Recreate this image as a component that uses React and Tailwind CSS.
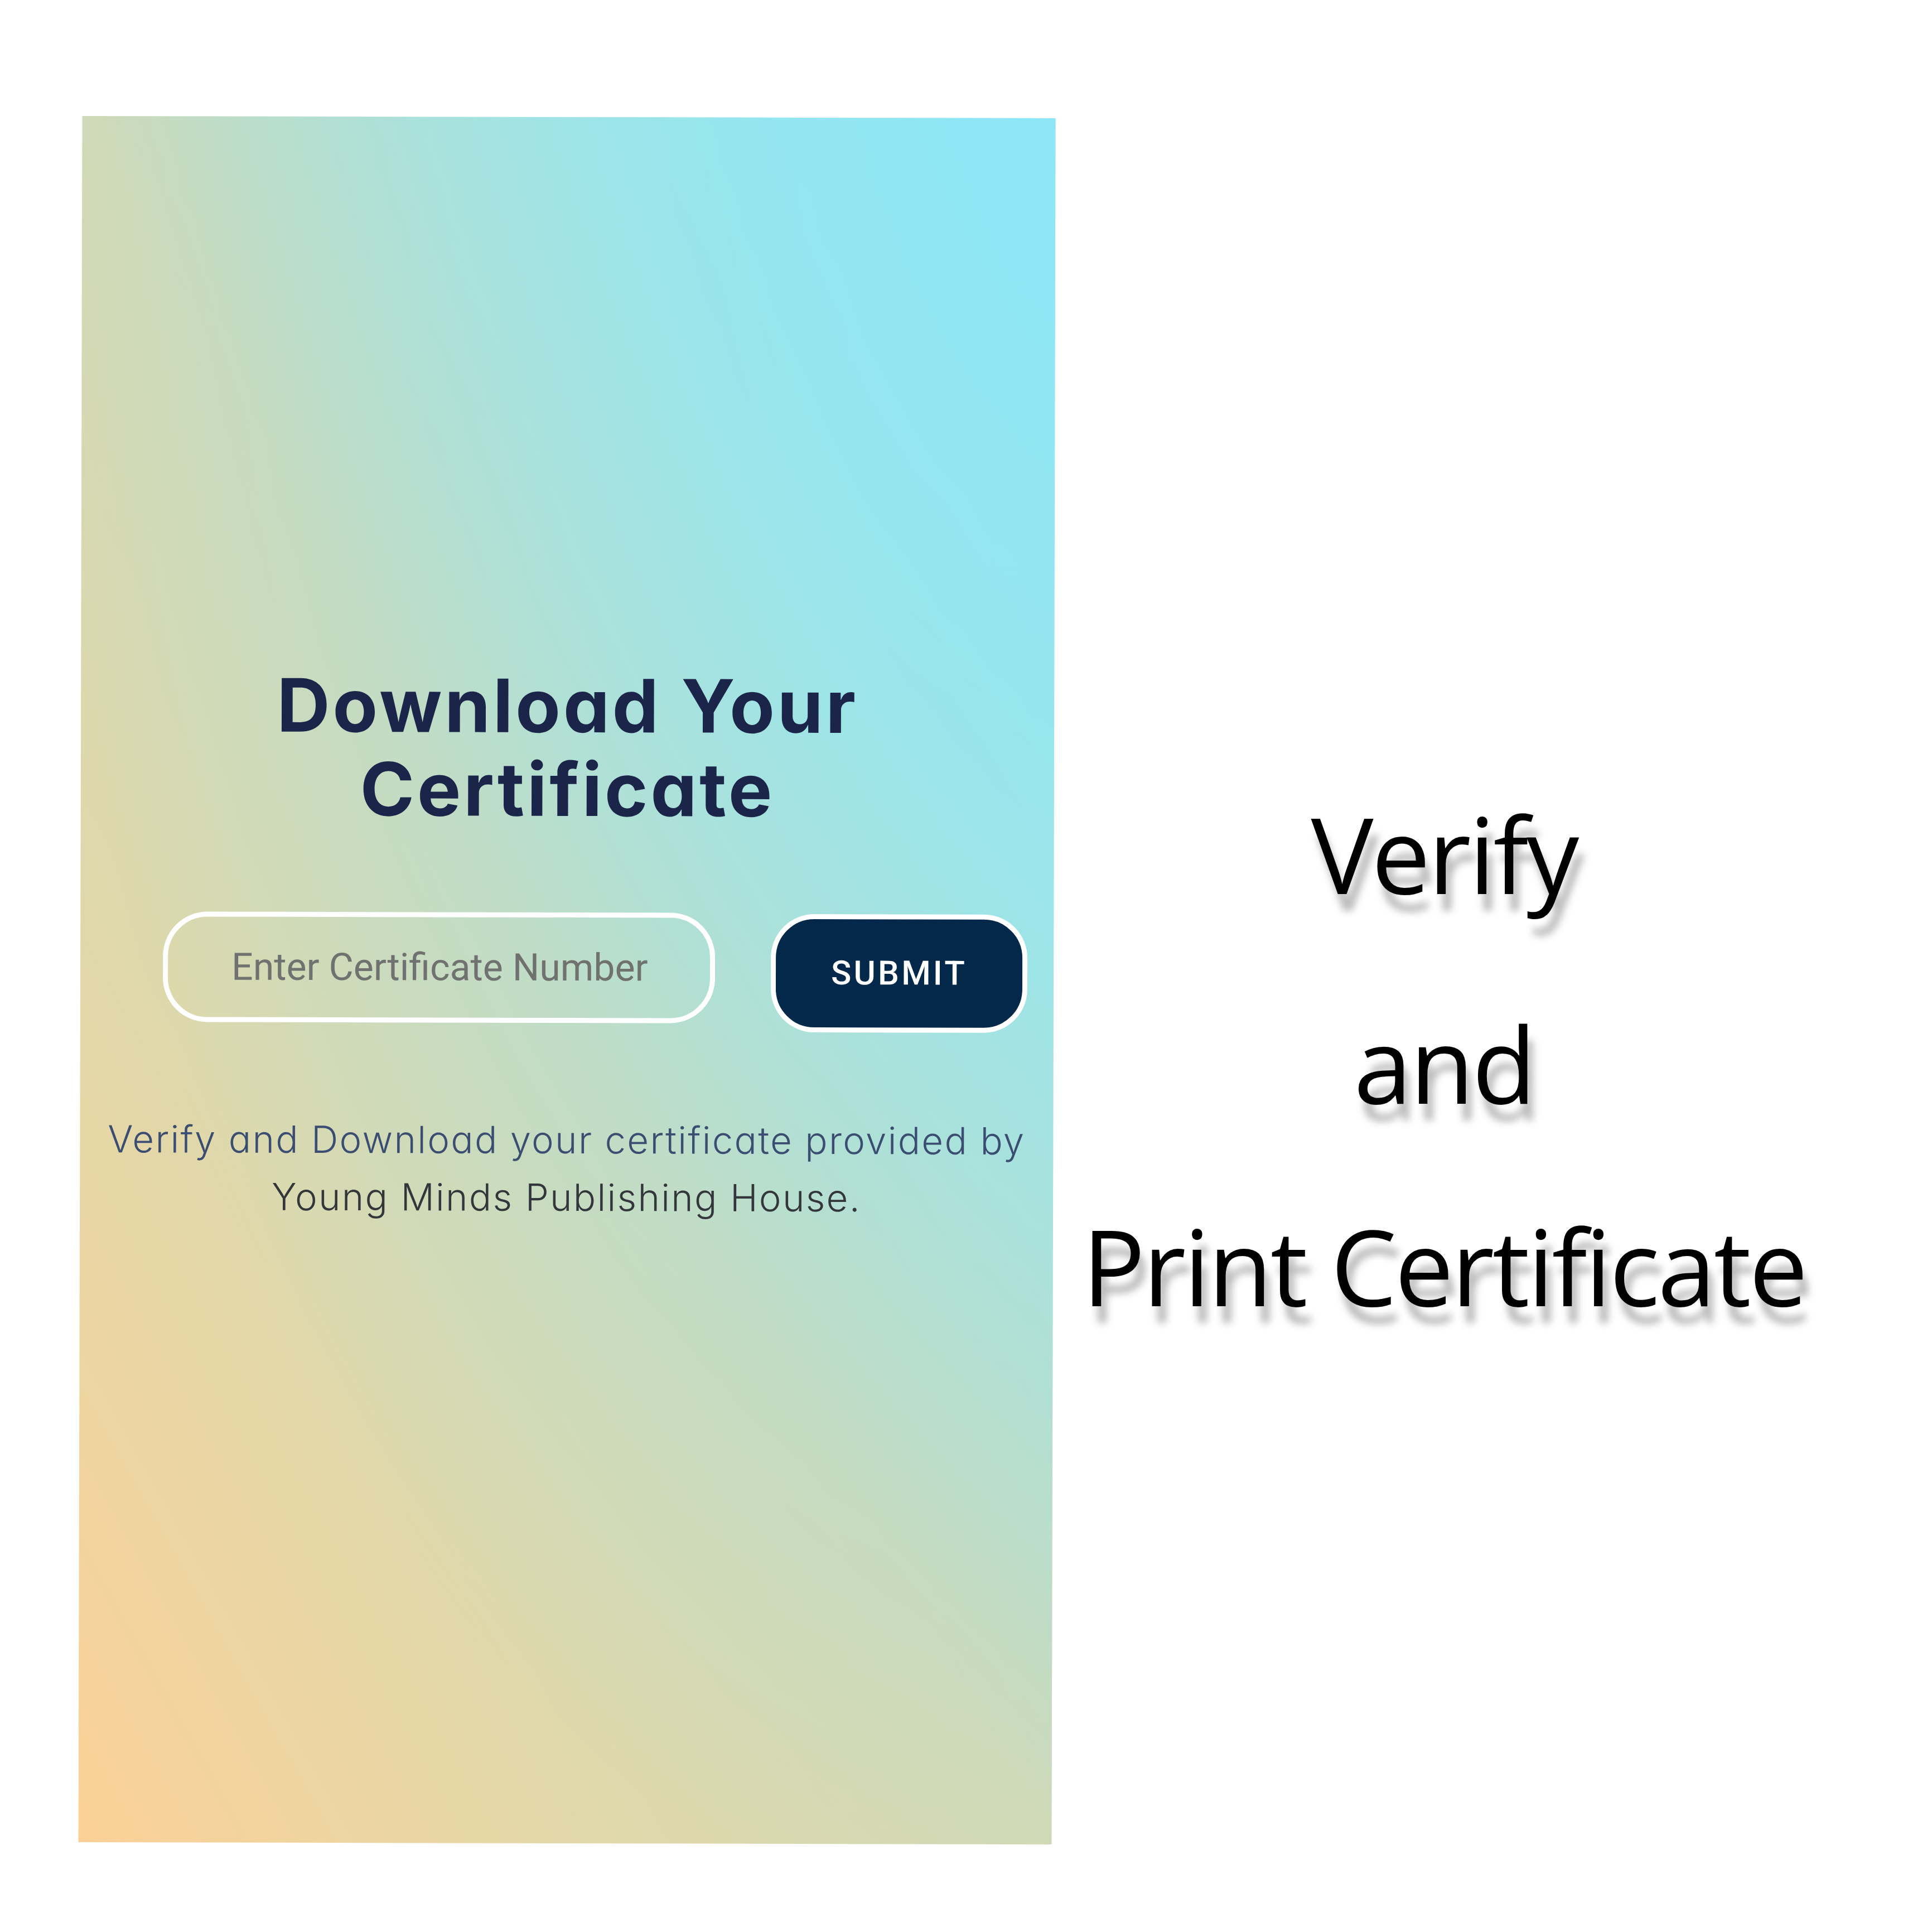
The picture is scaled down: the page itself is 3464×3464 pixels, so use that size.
// App.jsx
import React from "react";

export default function App() {
  return (
    <div className="w-[3464px] h-[3464px] bg-white flex items-start overflow-hidden">
      {/* Left: certificate card */}
      <section className="ml-[144px] mt-[210px] w-[1745px] h-[3095px] shrink-0 rotate-[0.13deg] flex flex-col items-center bg-[radial-gradient(ellipse_at_100%_0%,rgba(142,231,246,0.9)_0%,rgba(142,231,246,0.5)_35%,rgba(142,231,246,0)_75%),linear-gradient(to_top_right,#fcd197_0%,#dfd8ab_28%,#d4d8b3_50%,#aee1d8_75%,#8ee7f6_100%)]">
        <h1 className="mt-[980px] text-center text-[132px] leading-[150px] font-bold tracking-[0.035em] text-[#1b2449] [font-family:Inter,sans-serif] [font-feature-settings:'cv11']">
          Download Your
          <br />
          Certificate
        </h1>

        <form
          className="mt-[146px] self-stretch flex items-start gap-[100px] pl-[148px]"
          onSubmit={(e) => e.preventDefault()}
        >
          <input
            type="text"
            placeholder="Enter Certificate Number"
            className="w-[990px] h-[198px] shrink-0 rounded-[80px] border-[9px] border-white bg-transparent pl-[114px] text-[68px] text-[#707270] placeholder:text-[#707270] outline-none [font-family:Roboto,sans-serif]"
          />
          <button
            type="submit"
            className="mt-[2px] w-[460px] h-[212px] shrink-0 rounded-[78px] border-[9px] border-white bg-[#04284a] text-white text-[60px] font-medium tracking-[0.07em] [font-family:Roboto,sans-serif]"
          >
            SUBMIT
          </button>
        </form>

        <p className="mt-[142px] text-center text-[67px] leading-[103px] font-light tracking-[0.035em] [font-family:Inter,sans-serif] [font-feature-settings:'cv11']">
          <span className="text-[#3b4d70]">Verify and Download your certificate provided by</span>
          <br />
          <span className="text-[#33363b]">Young Minds Publishing House.</span>
        </p>
      </section>

      {/* Right: caption */}
      <div className="mt-[1436px] w-[1400px] shrink-0 flex flex-col items-center text-black text-[188px] leading-none tracking-[-0.02em] [font-family:'Open_Sans',sans-serif] [text-shadow:10px_30px_14px_rgba(0,0,0,0.28)]">
        <span className="block h-[188px]">Verify</span>
        <span className="block h-[188px] mt-[188px]">and</span>
        <span className="block h-[188px] mt-[175px]">Print Certificate</span>
      </div>
    </div>
  );
}
